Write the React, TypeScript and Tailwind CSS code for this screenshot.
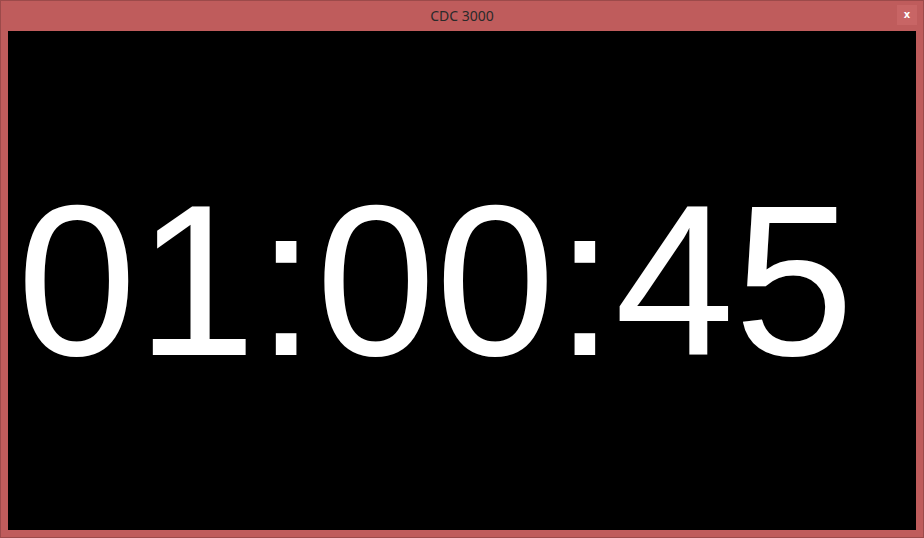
import React from 'react';

export default function App() {
  const time = '01:00:45';

  return (
    <div className="w-[924px] h-[538px] flex flex-col bg-[#bf5c5c] border border-[#9c4a4a]">
      {/* title bar */}
      <div className="relative h-[30px] flex items-center justify-center">
        <span className="text-[14px] text-[#2a2a2a] font-['Noto_Sans','Open_Sans',sans-serif] leading-none">
          CDC 3000
        </span>
        <div className="absolute right-[6px] top-[4px] w-[20px] h-[20px] bg-[#c86565] flex items-center justify-center">
          <span className="text-[10px] font-bold text-white leading-none font-['DejaVu_Sans',sans-serif]">x</span>
        </div>
      </div>

      {/* clock */}
      <div className="flex-1 mx-[7px] mb-[7px] bg-black flex items-center overflow-hidden">
        <span className="pl-[9px] text-white text-[215px] leading-none font-['Liberation_Sans',Arial,sans-serif]">
          {time}
        </span>
      </div>
    </div>
  );
}
